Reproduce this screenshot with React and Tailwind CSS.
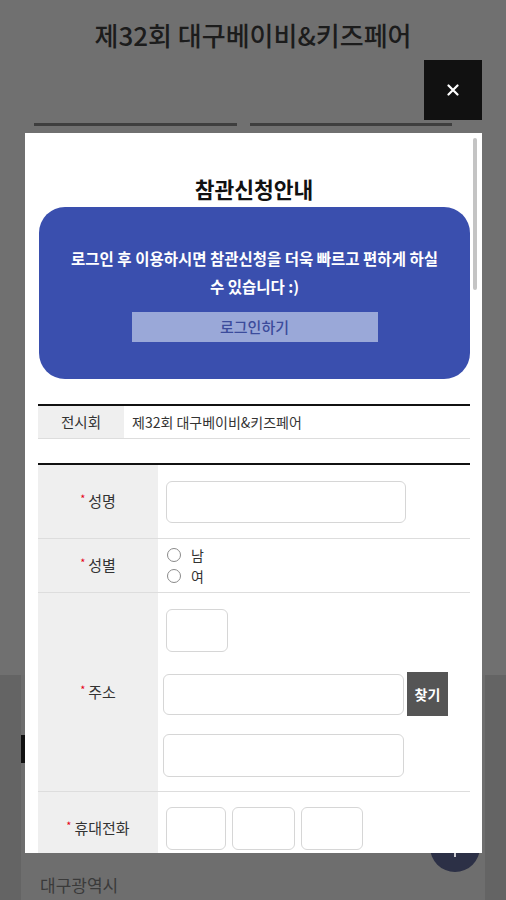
export default function App() {
  const inputCls = "block bg-white border border-[#d6d6d6] rounded-[6px]";
  const Label = ({ children }) => (
    <div className="w-[120px] shrink-0 bg-[#efefef] flex items-center justify-center text-[15px] text-[#333]">
      <span className="text-[#e60012] text-[11px] mr-[3px] relative -top-[3px]">*</span>
      {children}
    </div>
  );
  return (
    <div className="relative w-[506px] h-[900px] overflow-hidden bg-[#707070] font-['Noto_Sans_CJK_KR','Noto_Sans',sans-serif]">
      {/* underlying page */}
      <div className="flex flex-col h-full">
        <h1 className="pt-[17px] text-center text-[26px] leading-[36px] font-medium text-[#1c1c1c]">
          제32회 대구베이비&amp;키즈페어
        </h1>
        <div className="mt-[70px] flex gap-[13px] pl-[34px] pr-[54px]">
          <div className="flex-1 h-[3px] bg-[#3e3e3e]"></div>
          <div className="flex-1 h-[3px] bg-[#3e3e3e]"></div>
        </div>
        <div className="mt-auto h-[225px] bg-[#646464] px-[21px] flex">
          <div className="flex-1 bg-[#6e6e6e] flex flex-col">
            <div className="mt-[60px] h-[28px] border-l-[4px] border-[#111]"></div>
            <div className="mt-[109px] pl-[19px] text-[17px] leading-[26px] text-[#3a3a3a]">대구광역시</div>
          </div>
        </div>
      </div>

      {/* close button */}
      <button className="absolute left-[424px] top-[60px] w-[58px] h-[60px] bg-[#111] flex items-center justify-center">
        <svg width="12" height="12" viewBox="0 0 12 12" stroke="#fff" strokeWidth="2.2" strokeLinecap="round">
          <path d="M1.5 1.5l9 9M10.5 1.5l-9 9" />
        </svg>
      </button>

      {/* top button */}
      <div className="absolute left-[430px] top-[822px] w-[50px] h-[50px] rounded-full bg-[#2c3046] flex items-center justify-center">
        <svg width="20" height="24" viewBox="0 0 20 24" fill="none" stroke="#fff" strokeWidth="1.5">
          <path d="M10 22V3M4 9l6-6 6 6" />
        </svg>
      </div>

      {/* modal */}
      <div className="absolute left-[25px] top-[133px] w-[457px] h-[720px] bg-white overflow-hidden">
        <div className="absolute right-[5px] top-[5px] w-[4px] h-[152px] rounded-full bg-[#c4c4c4]"></div>
        <div className="pl-[13px] pr-[12px] pt-[42px]">
          <h2 className="text-center text-[21.5px] leading-[28px] font-bold text-[#111]">참관신청안내</h2>
          <div className="mt-[4px] ml-[1px] h-[172px] rounded-[26px] bg-[#3a4fae] pt-[37px] flex flex-col items-center">
            <p className="text-white font-bold text-[15.5px] leading-[28px] text-center">
              로그인 후 이용하시면 참관신청을 더욱 빠르고 편하게 하실
              <br />
              수 있습니다 :)
            </p>
            <button className="mt-[12px] w-[246px] h-[30px] bg-[#9aa8d8] text-[#3c4c9c] text-[15px] font-medium">
              로그인하기
            </button>
          </div>

          {/* exhibition table */}
          <div className="mt-[25px] border-t-2 border-[#111]">
            <div className="flex h-[33px] border-b border-[#dddddd]">
              <div className="w-[86px] bg-[#efefef] flex items-center justify-center text-[14.5px] text-[#333]">전시회</div>
              <div className="flex-1 pl-[8px] flex items-center text-[14px] text-[#333]">제32회 대구베이비&amp;키즈페어</div>
            </div>
          </div>

          {/* form table */}
          <div className="mt-[24px] border-t-2 border-[#111]">
            <div className="flex h-[74px] border-b border-[#dddddd]">
              <Label>성명</Label>
              <div className="flex-1 pl-[8px] flex items-center">
                <input className={`${inputCls} w-[240px] h-[42px]`} />
              </div>
            </div>
            <div className="flex h-[54px] border-b border-[#dddddd]">
              <Label>성별</Label>
              <div className="flex-1 pl-[8px] flex flex-col justify-center text-[14px] text-[#333]">
                <div className="flex items-center h-[21px]">
                  <span className="w-[14px] h-[14px] rounded-full border border-[#8a8a8a] ml-[1px]"></span>
                  <span className="ml-[10px]">남</span>
                </div>
                <div className="flex items-center h-[21px]">
                  <span className="w-[14px] h-[14px] rounded-full border border-[#8a8a8a] ml-[1px]"></span>
                  <span className="ml-[10px]">여</span>
                </div>
              </div>
            </div>
            <div className="flex h-[199px] border-b border-[#dddddd]">
              <Label>주소</Label>
              <div className="flex-1 pl-[5px] pt-[16px]">
                <input className={`${inputCls} ml-[3px] w-[62px] h-[43px]`} />
                <div className="mt-[20px] flex items-center h-[44px]">
                  <input className={`${inputCls} w-[241px] h-[41px]`} />
                  <button className="ml-[3px] w-[41px] h-[44px] bg-[#555] text-white font-bold text-[14px]">찾기</button>
                </div>
                <input className={`${inputCls} mt-[18px] w-[241px] h-[43px]`} />
              </div>
            </div>
            <div className="flex h-[73px] border-b border-[#dddddd]">
              <Label>휴대전화</Label>
              <div className="flex-1 pl-[8px] flex items-center gap-[6px]">
                <input className={`${inputCls} w-[60px] h-[43px]`} />
                <input className={`${inputCls} w-[63px] h-[43px]`} />
                <input className={`${inputCls} w-[62px] h-[43px]`} />
              </div>
            </div>
          </div>
        </div>
      </div>
    </div>
  );
}
